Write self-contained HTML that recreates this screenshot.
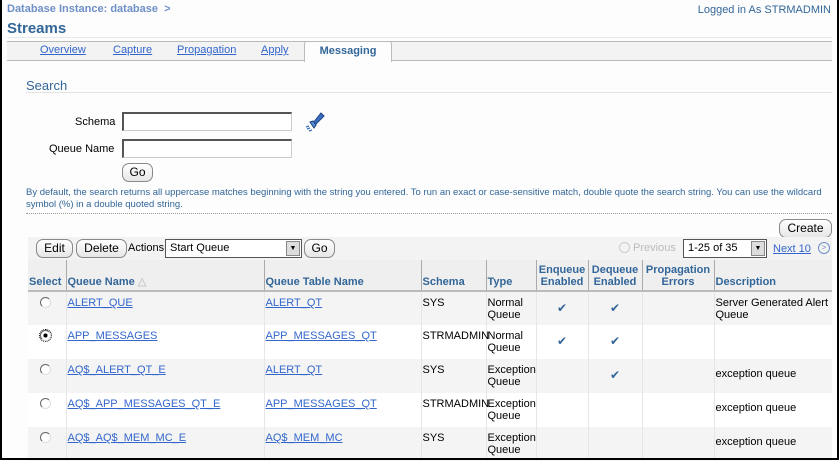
<!DOCTYPE html>
<html><head><style>
*{box-sizing:border-box}
body{margin:0;width:839px;height:460px;overflow:hidden;background:#fcfdfc;font-family:"Liberation Sans",Tahoma,sans-serif;font-size:11px;position:relative}
.frame{position:absolute;left:0;top:0;width:839px;height:460px;border-left:2px solid #000;border-right:2px solid #000;border-bottom:2px solid #000}
.a{position:absolute}
a{color:#3366cc;text-decoration:underline}
.btn{position:absolute;border:1px solid #888;border-radius:7px;background:linear-gradient(#fff,#e6e6e6);font-size:12px;text-align:center;line-height:16px;height:19px;color:#000}
.inp{position:absolute;border:1px solid #ccc;border-top:2px solid #555;border-left:2px solid #555;background:#fff;height:19px}
table{position:absolute;left:28px;top:260px;width:804px;border-collapse:collapse;font-size:11px;table-layout:fixed}
td,th{border-left:1px solid #e6e6e6;vertical-align:top;padding:5px 1px 3px}
th{color:#336699;font-weight:bold;font-size:11px;background:#efefef;vertical-align:bottom;text-align:left;border-left:1px solid #aaa;border-bottom:2px solid #bbb;padding:2px 1px;height:31px}
tr.o td{background:#f3f4f3}
tr.e td{background:#fff}
td{height:34px}
.ck{color:#336699;text-align:center;font-size:12px;padding-top:9px}
.rad{display:inline-block;width:11px;height:11px;border-radius:50%;border:1px solid #666;border-right-color:#ddd;border-bottom-color:#ddd;background:#fff;margin:0 0 0 11px}
</style></head><body>
<div class="a" style="left:7px;top:3px;color:#6f8fc8;font-weight:bold;font-size:11px">Database Instance: database &nbsp;&gt;</div>
<div class="a" style="right:8px;top:4px;color:#336699;font-size:11px">Logged in As STRMADMIN</div>
<div class="a" style="left:7px;top:20px;color:#336699;font-size:15px;font-weight:bold">Streams</div>
<div class="a" style="left:7px;top:37px;width:825px;border-top:1px solid #e8e8e8"></div>
<div class="a" style="left:7px;top:41px;width:825px;height:20px;background:#f2f3f2;border-top:1px solid #bbb;border-bottom:1px solid #bbb"></div>
<div class="a" style="left:40px;top:44px;font-size:11px"><a>Overview</a></div>
<div class="a" style="left:113px;top:44px"><a>Capture</a></div>
<div class="a" style="left:177px;top:44px"><a>Propagation</a></div>
<div class="a" style="left:261px;top:44px"><a>Apply</a></div>
<div class="a" style="left:304px;top:41px;width:88px;height:21px;background:#fcfdfc;border:1px solid #bbb;border-bottom:none;border-radius:3px 3px 0 0;color:#336699;font-weight:bold;text-align:center;line-height:19px">Messaging</div>
<div class="a" style="left:26px;top:78px;color:#336699;font-size:13px">Search</div>
<div class="a" style="left:26px;top:92px;width:806px;border-top:1px solid #e3e3e3"></div>
<div class="a" style="left:75px;top:116px">Schema</div>
<div class="inp" style="left:122px;top:112px;width:170px"></div>
<svg class="a" style="left:302px;top:110px" width="24" height="24" viewBox="0 0 24 24"><path d="M11 13 L19 3 L22 6 L13 15 Z" fill="#3a6fc0" stroke="#1a3f80" stroke-width="1"/><path d="M8 12 L11 11 L14 15 L12 18 Z" fill="#5d8fd8" stroke="#1a3f80"/><path d="M4 17l3-1M5 19l3-1M7 21l3-1" stroke="#3a6fc0" stroke-width="1.2"/></svg>
<div class="a" style="left:49px;top:143px">Queue Name</div>
<div class="inp" style="left:122px;top:139px;width:170px"></div>
<div class="btn" style="left:122px;top:163px;width:31px">Go</div>
<div class="a" style="left:26px;top:187px;color:#336699;font-size:9.5px;line-height:12px;width:800px">By default, the search returns all uppercase matches beginning with the string you entered. To run an exact or case-sensitive match, double quote the search string. You can use the wildcard symbol (%) in a double quoted string.</div>
<div class="a" style="left:26px;top:213px;width:806px;border-top:1px dotted #999"></div>
<div class="btn" style="left:779px;top:219px;width:53px">Create</div>
<div class="a" style="left:28px;top:237px;width:804px;height:23px;background:#f2f3f2"></div>
<div class="btn" style="left:36px;top:239px;width:37px">Edit</div>
<div class="btn" style="left:76px;top:239px;width:51px">Delete</div>
<div class="a" style="left:128px;top:242px;font-size:11px">Actions</div>
<div class="inp" style="left:165px;top:239px;width:137px;border:1px solid #555;font-size:11px;padding:2px 4px">Start Queue<span style="position:absolute;right:1px;top:1px;width:14px;height:15px;background:#ddd;border:1px solid #888;font-size:7px;text-align:center;line-height:13px">▼</span></div>
<div class="btn" style="left:304px;top:239px;width:31px">Go</div>
<div class="a" style="left:619px;top:242px;color:#bbb;font-size:11px"><span style="display:inline-block;width:11px;height:11px;border:1px solid #ccc;border-radius:50%;vertical-align:-2px"></span> Previous</div>
<div class="inp" style="left:683px;top:239px;width:84px;border:1px solid #555;font-size:11px;padding:2px 4px">1-25 of 35<span style="position:absolute;right:1px;top:1px;width:14px;height:15px;background:#ddd;border:1px solid #888;font-size:7px;text-align:center;line-height:13px">▼</span></div>
<div class="a" style="left:773px;top:243px"><a>Next 10</a></div>
<div class="a" style="left:818px;top:242px;width:12px;height:12px;border:1px solid #6f8fc8;border-radius:50%;color:#6f8fc8;font-size:8px;text-align:center;line-height:10px">&gt;</div>
<table>
<colgroup><col style="width:38px"><col style="width:198px"><col style="width:157px"><col style="width:65px"><col style="width:50px"><col style="width:52px"><col style="width:54px"><col style="width:72px"><col></colgroup>
<tr><th style="border-left:none">Select</th><th>Queue Name <span style="color:#ccc">△</span></th><th>Queue Table Name</th><th>Schema</th><th>Type</th><th style="text-align:center">Enqueue Enabled</th><th style="text-align:center">Dequeue Enabled</th><th style="text-align:center">Propagation Errors</th><th>Description</th></tr>
<tr class="o"><td style="border-left:none"><span class="rad"></span></td><td><a>ALERT_QUE</a></td><td><a>ALERT_QT</a></td><td>SYS</td><td>Normal Queue</td><td class="ck">✔</td><td class="ck">✔</td><td></td><td>Server Generated Alert Queue</td></tr>
<tr class="e"><td style="border-left:none"><span class="rad" style="background:radial-gradient(#000 30%,#fff 35%);outline:1px dotted #000"></span></td><td><a>APP_MESSAGES</a></td><td><a>APP_MESSAGES_QT</a></td><td>STRMADMIN</td><td>Normal Queue</td><td class="ck">✔</td><td class="ck">✔</td><td></td><td></td></tr>
<tr class="o"><td style="border-left:none"><span class="rad"></span></td><td><a>AQ$_ALERT_QT_E</a></td><td><a>ALERT_QT</a></td><td>SYS</td><td>Exception Queue</td><td></td><td class="ck">✔</td><td></td><td style="padding-top:9px">exception queue</td></tr>
<tr class="e"><td style="border-left:none"><span class="rad"></span></td><td><a>AQ$_APP_MESSAGES_QT_E</a></td><td><a>APP_MESSAGES_QT</a></td><td>STRMADMIN</td><td>Exception Queue</td><td></td><td></td><td></td><td style="padding-top:9px">exception queue</td></tr>
<tr class="o"><td style="border-left:none"><span class="rad"></span></td><td><a>AQ$_AQ$_MEM_MC_E</a></td><td><a>AQ$_MEM_MC</a></td><td>SYS</td><td>Exception Queue</td><td></td><td></td><td></td><td style="padding-top:9px">exception queue</td></tr>
</table>
<div class="frame"></div>
</body></html>
